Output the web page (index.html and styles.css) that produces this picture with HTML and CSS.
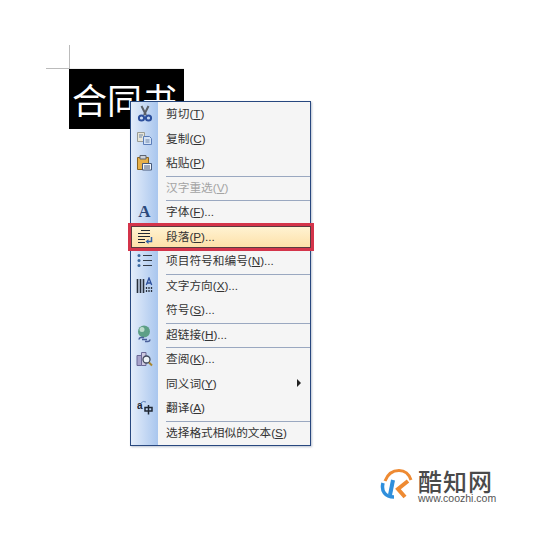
FILE: index.html
```html
<!DOCTYPE html>
<html lang="en">
<head>
    <meta charset="UTF-8">
    <title>合同书</title>
    <link rel="stylesheet" href="styles.css">
</head>
<body>
    <div class="page">
        <div class="crop-h"></div>
        <div class="crop-v"></div>
        <div class="selection">合同书</div>

        <div class="menu">
            <div class="row">
                <span class="gutter"><svg width="16" height="17" viewBox="0 0 16 17"><path d="M4.500 1l4.500 9M11.500 1L7 10" stroke="#5b6068" stroke-width="2" fill="none"/><circle cx="4.500" cy="13" r="2.600" fill="none" stroke="#2c4f9c" stroke-width="2"/><circle cx="11.500" cy="13" r="2.600" fill="none" stroke="#2c4f9c" stroke-width="2"/></svg></span>
                <span class="label">剪切(<u>T</u>)</span>
            </div>
            <div class="row">
                <span class="gutter"><svg width="17" height="15" viewBox="0 0 17 15"><path d="M1.500 1.500h7v9h-7z" fill="#e8e6d8" stroke="#9a9c94"/><path d="M7.500 5.500h6l2 2v6h-8z" fill="#d5e3f6" stroke="#5b7db8"/><path d="M3 4h4M3 6h3M9.500 9h4M9.500 11h4" stroke="#6f86a8"/></svg></span>
                <span class="label">复制(<u>C</u>)</span>
            </div>
            <div class="row">
                <span class="gutter"><svg width="17" height="17" viewBox="0 0 17 17"><path d="M1.500 3.500h11v12h-11z" fill="#e8b048" stroke="#8a6420"/><path d="M4 1.500h6v3.500H4z" fill="#cfd3da" stroke="#5d6572"/><path d="M6.500 9.500h9v6.500h-9z" fill="#f4f6fa" stroke="#47597a"/><path d="M8 12h6M8 14h6" stroke="#47597a"/></svg></span>
                <span class="label">粘贴(<u>P</u>)</span>
            </div>
            <div class="row sep disabled">
                <span class="gutter"></span>
                <span class="label">汉字重选(<u>V</u>)</span>
            </div>
            <div class="row sep">
                <span class="gutter"><span class="font-a">A</span></span>
                <span class="label">字体(<u>F</u>)...</span>
            </div>
            <div class="row active">
                <span class="gutter"><svg width="16" height="15" viewBox="0 0 16 15"><path d="M4 1.500h9M1 4.500h12M1 7.500h12M1 10.500h7M1 13.500h7" stroke="#1f2733" stroke-width="1.200"/><path d="M14.500 8v4.500H10" fill="none" stroke="#2f5fa8" stroke-width="1.500"/><path d="M11.500 10l-3 2.500 3 2.500z" fill="#2f5fa8"/></svg></span>
                <span class="label">段落(<u>P</u>)...</span>
            </div>
            <div class="row sep">
                <span class="gutter"><svg width="15" height="15" viewBox="0 0 15 15"><circle cx="2" cy="2.500" r="1.500" fill="#3a689f"/><circle cx="2" cy="7.500" r="1.500" fill="#3a689f"/><circle cx="2" cy="12.500" r="1.500" fill="#3a689f"/><path d="M6 2.500h9M6 7.500h9M6 12.500h9" stroke="#333a45"/></svg></span>
                <span class="label">项目符号和编号(<u>N</u>)...</span>
            </div>
            <div class="row sep">
                <span class="gutter"><svg width="17" height="17" viewBox="0 0 17 17"><path d="M1.500 2v14M4.500 2v14M7.500 2v14" stroke="#28303c" stroke-width="1.600"/><path d="M10.300 8l2.700-7 2.700 7M11.300 6h3.400" stroke="#2c4f9c" stroke-width="1.300" fill="none"/><path d="M10.500 10v6M13 10v6M15.500 10v6" stroke="#28303c" stroke-width="1.300" stroke-dasharray="2 1"/></svg></span>
                <span class="label">文字方向(<u>X</u>)...</span>
            </div>
            <div class="row">
                <span class="gutter"></span>
                <span class="label">符号(<u>S</u>)...</span>
            </div>
            <div class="row sep">
                <span class="gutter"><svg width="17" height="19" viewBox="0 0 17 19"><circle cx="8" cy="6.500" r="6" fill="#5d9f86"/><circle cx="6" cy="4.500" r="2.500" fill="#bcdccc"/><path d="M3 14.500a2.200 2.200 0 0 1 2-2h3M14 14.500a2.200 2.200 0 0 1-2 2H9M6 14.500h5" fill="none" stroke="#4a5f9a" stroke-width="1.600"/></svg></span>
                <span class="label">超链接(<u>H</u>)...</span>
            </div>
            <div class="row sep">
                <span class="gutter"><svg width="17" height="17" viewBox="0 0 17 17"><path d="M1 5.500h4.500v10H1z" fill="#a9a4cc" stroke="#6b6896"/><path d="M5.500 2.500h4.500v13H5.500z" fill="#cfc9e0" stroke="#6b6896"/><circle cx="10.500" cy="9.500" r="3.500" fill="#eef3f8" stroke="#40485c" stroke-width="1.300"/><path d="M13 12.500l3 3" stroke="#a8862f" stroke-width="2"/></svg></span>
                <span class="label">查阅(<u>K</u>)...</span>
            </div>
            <div class="row">
                <span class="gutter"></span>
                <span class="label">同义词(<u>Y</u>)</span>
                <span class="arrow"></span>
            </div>
            <div class="row">
                <span class="gutter"><svg width="16" height="15" viewBox="0 0 16 15"><text x="0" y="9" class="tr-a">a</text><path d="M11.500 5v9.500M8 7.500h7v3.500H8z" fill="none" stroke="#1f2733" stroke-width="1.500"/><path d="M4 3a4 4 0 0 1 5-1" fill="none" stroke="#5a7fb8"/></svg></span>
                <span class="label">翻译(<u>A</u>)</span>
            </div>
            <div class="row sep">
                <span class="gutter"></span>
                <span class="label">选择格式相似的文本(<u>S</u>)</span>
            </div>
            <div class="highlight"></div>
        </div>

        <div class="brand">
            <svg width="33" height="31" viewBox="0 0 33 31" fill="none"><path d="M5 12C8 4 13 1.500 19 1.500c6 0 10 3.500 12 9.500" stroke="#ee8a32" stroke-width="3"/><path d="M3 14c-2 8 2 14 11 14" stroke="#2f8fdc" stroke-width="3.500"/><path d="M13 11l-3 15" stroke="#2f8fdc" stroke-width="4"/><path d="M28 12l-10 8 7 8" stroke="#ee8a32" stroke-width="4"/></svg>
            <div class="brand-text">
                <div class="brand-name">酷知网</div>
                <div class="brand-url">www.coozhi.com</div>
            </div>
        </div>
    </div>
</body>
</html>
```

FILE: styles.css
```css
body {
    margin: 0;
    background-color: #fff;
    font-family: "Liberation Sans", "Noto Sans CJK SC", sans-serif;
}
.page {
    position: relative;
    width: 541px;
    height: 540px;
    overflow: hidden;
    padding: 69px 0 0 69px;
    box-sizing: border-box;
}
.crop-h {
    position: absolute;
    left: 46px;
    top: 68px;
    width: 138px;
    height: 1px;
    background: linear-gradient(to right, #bbb 0, #bbb 17%, #eee 17%, #eee 100%);
}
.crop-v {
    position: absolute;
    left: 69px;
    top: 45px;
    width: 1px;
    height: 24px;
    background-color: #bbb;
}
.selection {
    width: 115px;
    height: 60px;
    padding-left: 3px;
    box-sizing: border-box;
    background-color: #000;
    color: #fff;
    font-family: "Noto Sans CJK SC", sans-serif;
    font-size: 35px;
    line-height: 60px;
    white-space: nowrap;
    overflow: hidden;
}
.menu {
    position: absolute;
    left: 130px;
    top: 101px;
    width: 181px;
    height: 345px;
    box-sizing: border-box;
    border: 1px solid #28487f;
    background-color: #f5f5f5;
    box-shadow: 1px 1px 2px rgba(60,80,120,0.35);
    display: flex;
    flex-direction: column;
}
.row {
    flex: 1;
    display: flex;
    align-items: center;
    position: relative;
    font-size: 11.700px;
    color: #333;
}
.gutter {
    width: 27px;
    align-self: stretch;
    flex-shrink: 0;
    display: flex;
    align-items: center;
    justify-content: center;
    padding-bottom: 1px;
    box-sizing: border-box;
    background: linear-gradient(to right, #e4edfa, #a9c6ee);
}
.label {
    margin-left: 8px;
    margin-bottom: 3px;
    white-space: nowrap;
}
.sep::before {
    content: "";
    position: absolute;
    left: 35px;
    right: 0;
    top: 0;
    height: 1px;
    background-color: #9aa8c0;
}
.disabled {
    color: #a4a4a4;
}
.active {
    background: linear-gradient(to bottom, #fff4d6, #fddfa5);
}
.active .gutter {
    background: none;
}
.font-a {
    font-family: "Liberation Serif", serif;
    font-size: 17px;
    font-weight: bold;
    color: #2c4a7c;
}
.tr-a {
    font-family: "Liberation Sans", sans-serif;
    font-size: 10px;
    font-weight: bold;
    fill: #1f2733;
}
.arrow {
    position: absolute;
    right: 9px;
    top: 50%;
    margin-top: -5px;
    border-left: 4px solid #222;
    border-top: 4px solid transparent;
    border-bottom: 4px solid transparent;
}
.highlight {
    position: absolute;
    left: -3px;
    top: 121px;
    width: 186px;
    height: 28px;
    box-sizing: border-box;
    border: 3px solid #d4344a;
    outline: 1px solid #5a3a40;
    outline-offset: -4px;
}
.brand {
    position: absolute;
    left: 380px;
    top: 469px;
    display: flex;
    align-items: flex-start;
    gap: 5px;
}
.brand-name {
    font-family: "Noto Sans CJK SC", sans-serif;
    font-size: 24px;
    line-height: 24px;
    font-weight: 500;
    letter-spacing: 1px;
    color: #4a4a4a;
}
.brand-url {
    font-size: 10.500px;
    line-height: 10px;
    color: #555;
}
```
